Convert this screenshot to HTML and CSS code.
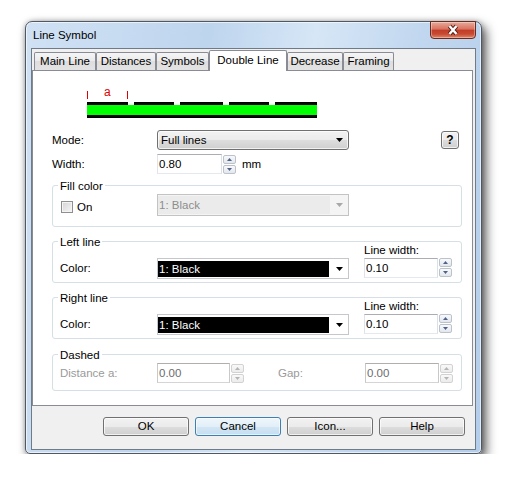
FILE: index.html
```html
<!DOCTYPE html>
<html lang="en">
<head>
    <meta charset="UTF-8">
    <meta name="viewport" content="width=device-width, initial-scale=1.0">
    <title>Line Symbol</title>
    <link rel="stylesheet" href="styles.css">
</head>
<body>
    <div class="window">
        <div class="titlebar">
            <span class="title">Line Symbol</span>
            <button class="close-btn" aria-label="Close">
                <svg width="14" height="12" viewBox="0 0 14 12">
                    <path d="M3.5 2 L10.5 10 M10.5 2 L3.5 10" stroke="#5a2219" stroke-width="4.2"/>
                    <path d="M3.5 2 L10.5 10 M10.5 2 L3.5 10" stroke="#fff" stroke-width="2.4"/>
                </svg>
            </button>
        </div>

        <div class="client">
            <div class="tabs">
                <span class="tab tab-main">Main Line</span>
                <span class="tab tab-dist">Distances</span>
                <span class="tab tab-sym">Symbols</span>
                <span class="tab tab-double active">Double Line</span>
                <span class="tab tab-dec">Decrease</span>
                <span class="tab tab-frame">Framing</span>
            </div>

            <div class="panel">
                <!-- preview of the double line with dash distance marker -->
                <svg class="preview" width="232" height="36" viewBox="0 0 232 36">
                    <rect x="0" y="8" width="1" height="8" fill="#e00000"/>
                    <text x="17" y="13" fill="#e00000" font-size="12" font-family="Liberation Sans, Arial, sans-serif">a</text>
                    <rect x="40" y="8" width="1" height="8" fill="#e00000"/>
                    <g fill="#000">
                        <rect x="0" y="19" width="41" height="3"/>
                        <rect x="47" y="19" width="40" height="3"/>
                        <rect x="93" y="19" width="43" height="3"/>
                        <rect x="142" y="19" width="40" height="3"/>
                        <rect x="188" y="19" width="42" height="3"/>
                        <rect x="0" y="32" width="230" height="3"/>
                    </g>
                    <rect x="0" y="22" width="230" height="10" fill="#00ff00"/>
                </svg>

                <div class="row row-mode">
                    <span class="lbl">Mode:</span>
                    <div class="combo combo-button">
                        <span>Full lines</span>
                        <svg class="arrow" width="7" height="4" viewBox="0 0 7 4"><path d="M0 0 H7 L3.5 4Z"/></svg>
                    </div>
                    <button class="help-btn">?</button>
                </div>

                <div class="row row-width">
                    <span class="lbl">Width:</span>
                    <input class="edit edit-width" value="0.80">
                    <div class="spin">
                        <span class="spin-btn"><svg width="5" height="3" viewBox="0 0 5 3"><path d="M0 3 L2.5 0 L5 3Z"/></svg></span>
                        <span class="spin-btn"><svg width="5" height="3" viewBox="0 0 5 3"><path d="M0 0 H5 L2.5 3Z"/></svg></span>
                    </div>
                    <span class="unit">mm</span>
                </div>

                <div class="group group-fill">
                    <div class="legend">Fill color</div>
                    <div class="row fill-row">
                        <label class="check"><span class="check-box"></span>On</label>
                        <div class="combo combo-disabled">
                            <span class="swatch">1: Black</span>
                            <svg class="arrow" width="7" height="4" viewBox="0 0 7 4"><path d="M0 0 H7 L3.5 4Z"/></svg>
                        </div>
                    </div>
                </div>

                <div class="group group-line">
                    <div class="legend">Left line</div>
                    <div class="line-row">
                        <span class="lbl">Color:</span>
                        <div class="combo combo-color">
                            <span class="swatch">1: Black</span>
                            <svg class="arrow" width="7" height="4" viewBox="0 0 7 4"><path d="M0 0 H7 L3.5 4Z"/></svg>
                        </div>
                        <div class="side">
                            <div class="side-label">Line width:</div>
                            <div class="spin-field">
                                <input class="edit edit-line" value="0.10">
                                <div class="spin">
                                    <span class="spin-btn"><svg width="5" height="3" viewBox="0 0 5 3"><path d="M0 3 L2.5 0 L5 3Z"/></svg></span>
                                    <span class="spin-btn"><svg width="5" height="3" viewBox="0 0 5 3"><path d="M0 0 H5 L2.5 3Z"/></svg></span>
                                </div>
                            </div>
                        </div>
                    </div>
                </div>

                <div class="group group-line">
                    <div class="legend">Right line</div>
                    <div class="line-row">
                        <span class="lbl">Color:</span>
                        <div class="combo combo-color">
                            <span class="swatch">1: Black</span>
                            <svg class="arrow" width="7" height="4" viewBox="0 0 7 4"><path d="M0 0 H7 L3.5 4Z"/></svg>
                        </div>
                        <div class="side">
                            <div class="side-label">Line width:</div>
                            <div class="spin-field">
                                <input class="edit edit-line" value="0.10">
                                <div class="spin">
                                    <span class="spin-btn"><svg width="5" height="3" viewBox="0 0 5 3"><path d="M0 3 L2.5 0 L5 3Z"/></svg></span>
                                    <span class="spin-btn"><svg width="5" height="3" viewBox="0 0 5 3"><path d="M0 0 H5 L2.5 3Z"/></svg></span>
                                </div>
                            </div>
                        </div>
                    </div>
                </div>

                <div class="group group-dashed">
                    <div class="legend">Dashed</div>
                    <div class="row dash-row">
                        <span class="lbl disabled">Distance a:</span>
                        <input class="edit edit-dist" value="0.00" disabled>
                        <div class="spin spin-off">
                            <span class="spin-btn"><svg width="5" height="3" viewBox="0 0 5 3"><path d="M0 3 L2.5 0 L5 3Z"/></svg></span>
                            <span class="spin-btn"><svg width="5" height="3" viewBox="0 0 5 3"><path d="M0 0 H5 L2.5 3Z"/></svg></span>
                        </div>
                        <span class="gap-lbl disabled">Gap:</span>
                        <input class="edit edit-line" value="0.00" disabled>
                        <div class="spin spin-off">
                            <span class="spin-btn"><svg width="5" height="3" viewBox="0 0 5 3"><path d="M0 3 L2.5 0 L5 3Z"/></svg></span>
                            <span class="spin-btn"><svg width="5" height="3" viewBox="0 0 5 3"><path d="M0 0 H5 L2.5 3Z"/></svg></span>
                        </div>
                    </div>
                </div>
            </div>

            <div class="buttons">
                <button class="btn">OK</button>
                <button class="btn btn-default">Cancel</button>
                <button class="btn">Icon...</button>
                <button class="btn">Help</button>
            </div>
        </div>
    </div>
</body>
</html>
```

FILE: styles.css
```css
body {
    margin: 0;
    background: #fff;
    font-family: "Segoe UI", "Liberation Sans", Arial, sans-serif;
    font-size: 11.5px;
    color: #000;
}

button,
input {
    font: inherit;
    color: inherit;
}

/* window frame */
.window {
    width: 457px;
    height: 433px;
    box-sizing: border-box;
    margin: 21px 0 0 25px;
    padding: 0 5px 4px;
    border: 1px solid #4f5863;
    border-radius: 7px 7px 5px 5px;
    background: linear-gradient(100deg, #d0e1f4 0%, #bed5ee 35%, #d6e6f6 55%, #c1d7ef 75%, #b4cdea 100%);
    box-shadow: 4px 5px 11px rgba(0, 0, 0, 0.65), 0 0 5px rgba(0, 0, 0, 0.25), inset 0 0 0 1px rgba(255, 255, 255, 0.6);
}

.titlebar {
    display: flex;
    justify-content: space-between;
    align-items: flex-start;
    height: 26px;
}

.title {
    padding: 6px 0 0 2px;
    line-height: 15px;
}

.close-btn {
    width: 46px;
    height: 18px;
    margin-top: -1px;
    padding: 0;
    display: flex;
    align-items: center;
    justify-content: center;
    border: 1px solid #6b2a20;
    border-radius: 0 0 4px 4px;
    background: linear-gradient(#e9a99a 0%, #d8725f 45%, #c23c27 50%, #c84a32 75%, #dd8768 100%);
    box-shadow: inset 0 0 0 1px rgba(255, 255, 255, 0.35);
}

.client {
    height: 402px;
    box-sizing: border-box;
    border: 1px solid #6f7c88;
    background: #f0f0f0;
}

/* tab strip */
.tabs {
    display: flex;
    align-items: flex-end;
    height: 21px;
    padding-left: 2px;
}

.tab {
    height: 18px;
    box-sizing: border-box;
    border: 1px solid #898c95;
    border-bottom: none;
    border-radius: 2px 2px 0 0;
    background: linear-gradient(#f5f5f5, #ebebeb 45%, #dedede 50%, #e3e3e3);
    text-align: center;
    line-height: 17px;
}

.tab.active {
    position: relative;
    z-index: 1;
    height: 21px;
    margin-bottom: -1px;
    background: #fff;
    line-height: 19px;
}

.tab-main { width: 62px; }
.tab-dist { width: 60px; }
.tab-sym { width: 53px; }
.tab-double { width: 78px; }
.tab-dec { width: 56px; }
.tab-frame { width: 51px; }

.panel {
    height: 336px;
    box-sizing: border-box;
    margin-right: 2px;
    padding: 12px 10px 0 19px;
    border: 1px solid #898c95;
    background: #fff;
}

.preview {
    display: block;
    margin-left: 35px;
}

.row {
    display: flex;
    align-items: center;
}

.lbl {
    flex: none;
    width: 105px;
}

.row-mode {
    height: 20px;
    margin-top: 11px;
}

.row-width {
    height: 20px;
    margin-top: 4px;
}

/* combo boxes */
.combo {
    flex: none;
    display: flex;
    align-items: center;
    justify-content: space-between;
    width: 192px;
    box-sizing: border-box;
    padding-right: 5px;
}

.combo-button {
    height: 20px;
    padding-left: 3px;
    border: 1px solid #707070;
    border-radius: 3px;
    background: linear-gradient(#f2f2f2, #ebebeb 50%, #dddddd 51%, #cfcfcf);
    box-shadow: inset 0 0 0 1px rgba(255, 255, 255, 0.7);
}

.combo-disabled {
    height: 22px;
    border: 1px solid #c3c3c3;
    background: #f4f4f4;
}

.combo-disabled .swatch {
    align-self: stretch;
    width: 171px;
    margin: 1px 0;
    padding-left: 1px;
    background: #ebebeb;
    color: #8d8d8d;
    line-height: 18px;
}

.combo-disabled .arrow { fill: #a8a8a8; }

.combo-color {
    height: 21px;
    border: 1px solid #c4c8cd;
    background: #fff;
}

.combo-color .swatch {
    align-self: flex-start;
    width: 171px;
    height: 16px;
    margin-top: 2px;
    padding-left: 1px;
    box-sizing: border-box;
    background: #000;
    color: #fff;
    line-height: 16px;
}

.help-btn {
    width: 18px;
    height: 18px;
    margin: 0 3px 0 auto;
    padding: 0;
    border: 1px solid #707070;
    border-radius: 3px;
    background: linear-gradient(#f2f2f2, #ebebeb 50%, #dddddd 51%, #cfcfcf);
    box-shadow: inset 0 0 0 1px rgba(255, 255, 255, 0.7);
    font-weight: bold;
    font-size: 12px;
    line-height: 14px;
}

/* edit fields and up-down buttons */
.edit {
    flex: none;
    height: 20px;
    box-sizing: border-box;
    margin: 0;
    padding: 0 0 0 1px;
    border: 1px solid;
    border-color: #abadb3 #dbdfe6 #e3e9ef #e2e3ea;
    background: #fff;
    outline: none;
}

.edit-width { width: 65px; }
.edit-line { width: 74px; }
.edit-dist { width: 73px; }

.edit:disabled {
    border-color: #afafaf #c9c9c9 #d5d5d5 #c9c9c9;
    background: #fff;
    color: #6d6d6d;
}

.spin {
    flex: none;
    display: flex;
    flex-direction: column;
    gap: 1px;
    width: 13px;
    margin-left: 1px;
}

.spin-btn {
    display: flex;
    align-items: center;
    justify-content: center;
    height: 9px;
    box-sizing: border-box;
    border: 1px solid #bcc2ca;
    border-radius: 2px;
    background: linear-gradient(#f8f9fb, #e3e7ed);
}

.spin-btn svg { fill: #4f6388; }

.spin-off .spin-btn {
    border-color: #d2d2d2;
    background: linear-gradient(#f9f9f9, #ececec);
}

.spin-off .spin-btn svg { fill: #b4b4b4; }

.unit { margin-left: 6px; }

/* group boxes */
.group {
    padding: 0 7px 3px;
    border: 1px solid #d5dfe5;
    border-radius: 3px;
}

.group .lbl { width: 97px; }

.legend {
    width: fit-content;
    margin: -7px 0 -7px -2px;
    padding: 0 2px;
    background: #fff;
    line-height: 14px;
}

.group-fill { margin-top: 11px; padding-bottom: 10px; }
.group-line { margin-top: 14px; }
.group-dashed { margin-top: 15px; padding-bottom: 7px; }

.fill-row {
    height: 22px;
    margin-top: 8px;
}

.check {
    flex: none;
    display: flex;
    align-items: center;
    width: 97px;
    margin-top: 3px;
}

.check-box {
    width: 12px;
    height: 12px;
    box-sizing: border-box;
    margin: 0 4px 0 1px;
    border: 1px solid #8e8f8f;
    background: linear-gradient(135deg, #d4d4d4, #f6f6f6);
    box-shadow: inset 0 0 0 1px #f4f4f4;
}

.line-row {
    display: flex;
    align-items: flex-end;
}

.line-row .lbl {
    height: 21px;
    line-height: 21px;
}

.side { margin-left: 15px; }

.side-label {
    height: 16px;
    line-height: 16px;
}

.spin-field {
    display: flex;
    margin-bottom: 1px;
}

.dash-row {
    height: 20px;
    margin-top: 8px;
}

.disabled { color: #9a9a9a; }

.gap-lbl {
    flex: none;
    width: 87px;
    margin-left: 34px;
}

/* dialog buttons */
.buttons {
    display: flex;
    justify-content: flex-end;
    gap: 6px;
    padding: 11px 10px 0 0;
}

.btn {
    width: 86px;
    height: 19px;
    padding: 0;
    border: 1px solid #707070;
    border-radius: 3px;
    background: linear-gradient(#f2f2f2, #ebebeb 50%, #dddddd 51%, #cfcfcf);
    box-shadow: inset 0 0 0 1px rgba(255, 255, 255, 0.7);
    line-height: 15px;
}

.btn-default {
    border-color: #3c7fb1;
    background: linear-gradient(#eef6fc, #e2eff8 50%, #d2e6f4 51%, #c6def0);
    box-shadow: inset 0 0 0 1px rgba(255, 255, 255, 0.6);
}
```
